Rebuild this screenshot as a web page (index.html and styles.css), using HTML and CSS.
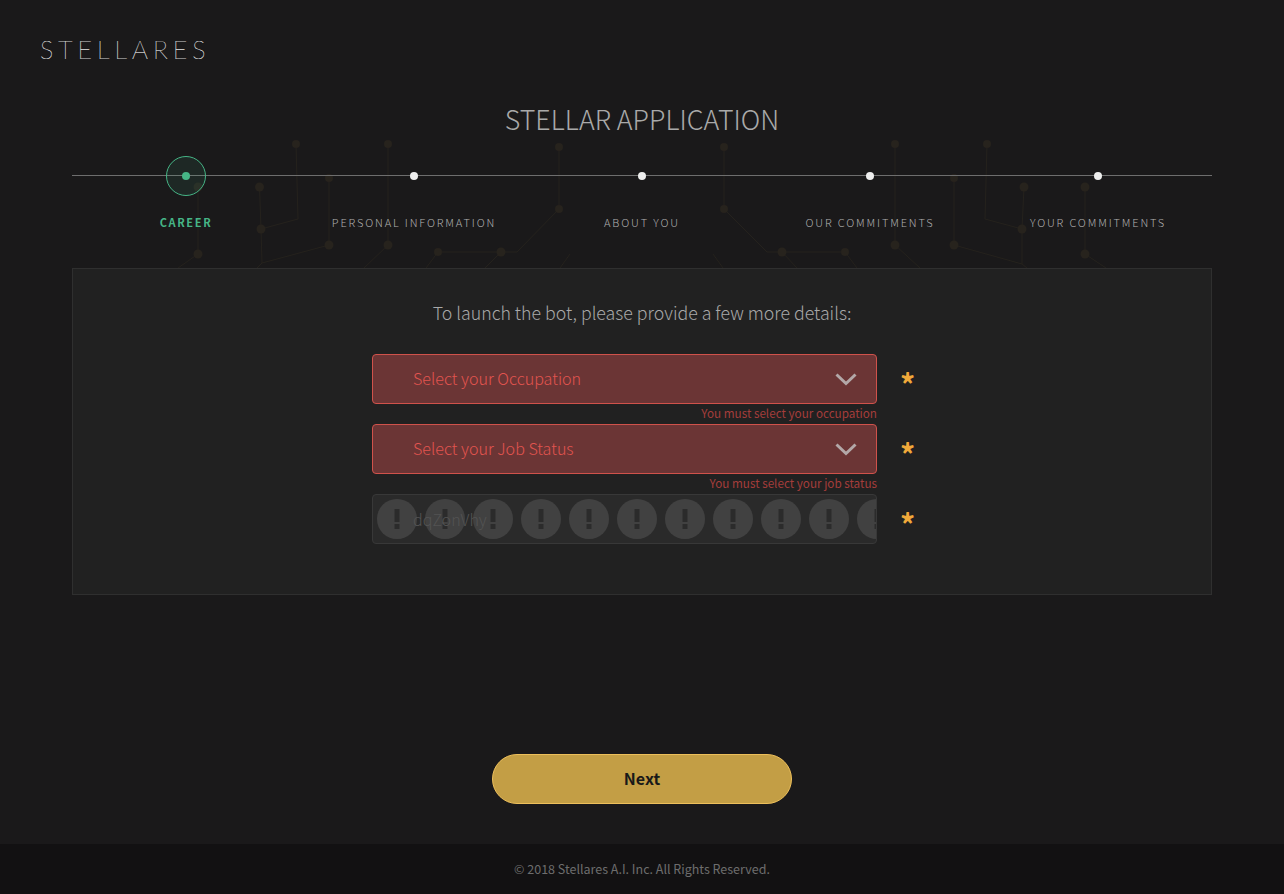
FILE: index.html
```html
<!DOCTYPE html>
<html lang="en">
<head>
<meta charset="utf-8">
<title>Stellares</title>
<link rel="stylesheet" href="styles.css">
</head>
<body>
<div class="page">
  <svg class="circuit" width="1284" height="268" viewBox="0 0 1284 268" aria-hidden="true">
    <g class="wires">
      <path d="M198 187V254L178 268"/>
      <path d="M296 144L298 219L261 229"/>
      <path d="M259.500 187L261 229L262 263L329 245V178"/>
      <path d="M262 263L257 268"/>
      <path d="M388 144V245L364 268"/>
      <path d="M559 147V209L517 252H438L426 268"/>
      <path d="M501 252L485 268"/>
      <path d="M570 254L560 268"/>
      <path d="M724 147V209L767 252H845L857 268"/>
      <path d="M782 252L797 268"/>
      <path d="M713 254L723 268"/>
      <path d="M895 144V245L920 268"/>
      <path d="M954 178V245L1022 264L1027 268"/>
      <path d="M1024 187L1022 229V264"/>
      <path d="M987 144L985 219L1022 229"/>
      <path d="M1085 187V254L1106 268"/>
    </g>
    <g class="nodes">
      <circle cx="198" cy="187" r="4.500"/><circle cx="198" cy="254" r="4.500"/>
      <circle cx="296" cy="144" r="4"/><circle cx="259.500" cy="187" r="4.500"/><circle cx="261" cy="229" r="4.500"/>
      <circle cx="329" cy="178" r="4"/><circle cx="329" cy="245" r="4.500"/>
      <circle cx="388" cy="144" r="4"/><circle cx="388" cy="245" r="4.500"/>
      <circle cx="559" cy="147" r="4"/><circle cx="559" cy="209" r="4"/>
      <circle cx="501" cy="252" r="4.500"/><circle cx="438" cy="252" r="4"/>
      <circle cx="724" cy="147" r="4"/><circle cx="724" cy="209" r="4"/>
      <circle cx="782" cy="252" r="4.500"/><circle cx="845" cy="252" r="4"/>
      <circle cx="895" cy="144" r="4"/><circle cx="895" cy="245" r="4.500"/>
      <circle cx="954" cy="178" r="4"/><circle cx="954" cy="245" r="4.500"/>
      <circle cx="1024" cy="187" r="4.500"/><circle cx="1022" cy="229" r="4.500"/>
      <circle cx="987" cy="144" r="4"/>
      <circle cx="1085" cy="187" r="4.500"/><circle cx="1085" cy="254" r="4.500"/>
    </g>
  </svg>

  <header class="brand">STELLARES</header>

  <main class="main">
    <h1 class="title">STELLAR APPLICATION</h1>

    <ol class="steps">
      <li class="step step-active"><span class="marker"><span class="dot"></span></span><span class="label">CAREER</span></li>
      <li class="step"><span class="marker"><span class="dot"></span></span><span class="label">PERSONAL INFORMATION</span></li>
      <li class="step"><span class="marker"><span class="dot"></span></span><span class="label">ABOUT YOU</span></li>
      <li class="step"><span class="marker"><span class="dot"></span></span><span class="label">OUR COMMITMENTS</span></li>
      <li class="step"><span class="marker"><span class="dot"></span></span><span class="label">YOUR COMMITMENTS</span></li>
    </ol>

    <section class="card">
      <p class="intro">To launch the bot, please provide a few more details:</p>

      <div class="row">
        <div class="field field-error">
          <span class="placeholder">Select your Occupation</span>
          <svg class="chevron" width="22" height="13" viewBox="0 0 22 13"><path d="M1.500 1.500L11 10.500L20.500 1.500"/></svg>
        </div>
        <span class="req">*</span>
      </div>
      <p class="error">You must select your occupation</p>

      <div class="row">
        <div class="field field-error">
          <span class="placeholder">Select your Job Status</span>
          <svg class="chevron" width="22" height="13" viewBox="0 0 22 13"><path d="M1.500 1.500L11 10.500L20.500 1.500"/></svg>
        </div>
        <span class="req">*</span>
      </div>
      <p class="error">You must select your job status</p>

      <div class="row">
        <div class="field field-filled">
          <svg class="warn-strip" width="503" height="48" aria-hidden="true">
            <defs>
              <pattern id="warn" x="4" y="4" width="48" height="48" patternUnits="userSpaceOnUse">
                <circle cx="20" cy="20" r="20" fill="#414141"/>
                <rect x="17.500" y="10" width="5" height="13" fill="#2b2b2b"/>
                <rect x="17.500" y="25" width="5" height="5" fill="#2b2b2b"/>
              </pattern>
            </defs>
            <rect width="503" height="48" fill="url(#warn)"/>
          </svg>
          <span class="value">dqZonVhy</span>
        </div>
        <span class="req">*</span>
      </div>
    </section>

    <div class="actions"><button class="next" type="button">Next</button></div>
  </main>

  <footer class="footer">© 2018 Stellares A.I. Inc. All Rights Reserved.</footer>
</div>
</body>
</html>
```

FILE: styles.css
```css
* { box-sizing: border-box; }
html, body { margin: 0; padding: 0; }
body {
  background: #1a191a;
  color: #aaa;
  font-family: "Noto Sans CJK JP", "Noto Sans", sans-serif;
}
.page {
  position: relative;
  width: 1284px;
  height: 894px;
  display: flex;
  flex-direction: column;
  overflow: hidden;
}
.circuit { position: absolute; left: 0; top: 0; }
.wires path { fill: none; stroke: #25221d; stroke-width: 1; }
.nodes circle { fill: #27231d; }

.brand {
  position: relative;
  height: 76px;
  padding: 34px 0 0 40px;
  font-family: "Lato", sans-serif;
  font-weight: 100;
  font-size: 25px;
  line-height: 30px;
  letter-spacing: 5px;
  color: #fff;
  -webkit-text-stroke: 0.200px #ddd;
}
.main { position: relative; flex: 1; padding: 0 72px; }
.title {
  margin: 0;
  height: 64px;
  padding-top: 24px;
  text-align: center;
  font-size: 26.800px;
  line-height: 38px;
  font-weight: 300;
  color: #a9a9a9;
}
.steps {
  position: relative;
  list-style: none;
  margin: 0;
  padding: 0;
  height: 128px;
  display: grid;
  grid-template-columns: repeat(5, 228px);
}
.steps::before {
  content: "";
  position: absolute;
  left: 0; right: 0; top: 35px;
  height: 1px;
  background: #6e6e6e;
}
.step { display: flex; flex-direction: column; align-items: center; position: relative; }
.marker {
  height: 40px;
  width: 40px;
  margin-top: 16px;
  display: flex;
  align-items: center;
  justify-content: center;
  border-radius: 50%;
}
.dot { width: 8px; height: 8px; border-radius: 50%; background: #eee; }
.step-active .marker { border: 1px solid #46b586; background: rgba(70, 181, 134, .1); }
.step-active .dot { background: #46b586; }
.label {
  margin-top: 19px;
  font-size: 11px;
  line-height: 14px;
  letter-spacing: 1.850px;
  font-weight: 300;
  white-space: nowrap;
  color: #b0b0b0;
}
.step-active .label { color: #46b586; font-weight: 700; letter-spacing: 1.650px; }

.card {
  height: 327px;
  background: #212121;
  border: 1px solid #2f2f2f;
  padding-top: 31px;
}
.intro {
  margin: 0 0 29px;
  text-align: center;
  font-size: 17.750px;
  line-height: 25px;
  font-weight: 300;
  color: #a8a8a8;
}
.row { display: flex; align-items: center; padding-left: 299px; }
.field {
  position: relative;
  width: 505px;
  height: 50px;
  border-radius: 4px;
  padding: 0 19px 0 40px;
  display: flex;
  align-items: center;
  justify-content: space-between;
  font-size: 16.100px;
  font-weight: 300;
  overflow: hidden;
}
.field-error { background: #6b3535; border: 1px solid #d0524b; color: #e2544f; }
.placeholder { margin-top: -2px; }
.field-filled { background: #2a2a2a; border: 1px solid #383838; color: #535353; }
.warn-strip { position: absolute; left: 0; top: 0; }
.value { position: relative; }
.chevron path { fill: none; stroke: #b3a8a8; stroke-width: 3; }
.req {
  width: 12px;
  margin-left: 23px;
  text-align: center;
  color: #f0a93a;
  font-size: 30px;
  line-height: 30px;
  font-weight: 700;
  height: 30px;
  padding-top: 4px;
}
.error {
  margin: 0 0 0 299px;
  width: 505px;
  height: 20px;
  padding-bottom: 2px;
  text-align: right;
  font-size: 11.700px;
  line-height: 18px;
  color: #a43d3b;
}
.actions { display: flex; justify-content: center; padding-top: 159px; }
.next {
  width: 300px;
  height: 50px;
  border-radius: 25px;
  border: 1px solid #edbf5b;
  background: #c39e45;
  color: #191919;
  font-family: inherit;
  font-size: 16px;
  font-weight: 700;
  padding: 0 0 2px;
}
.footer {
  position: relative;
  height: 50px;
  background: #121112;
  text-align: center;
  font-size: 12.500px;
  line-height: 50px;
  color: #6d6d6d;
}
```
